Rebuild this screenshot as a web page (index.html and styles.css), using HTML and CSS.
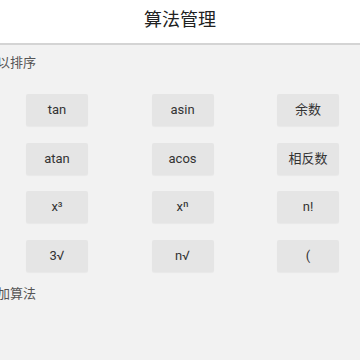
FILE: index.html
```html
<!DOCTYPE html>
<html lang="zh">
<head>
    <meta charset="UTF-8">
    <meta name="viewport" content="width=device-width, initial-scale=1.0">
    <title>算法管理</title>
    <link rel="stylesheet" href="styles.css">
</head>
<body>
    <div class="header">算法管理</div>

    <div class="section-label">以排序</div>
    <div class="grid">
        <div class="button">tan</div>
        <div class="button">asin</div>
        <div class="button">余数</div>
        <div class="button">atan</div>
        <div class="button">acos</div>
        <div class="button">相反数</div>
        <div class="button">x³</div>
        <div class="button">xⁿ</div>
        <div class="button">n!</div>
        <div class="button">3√</div>
        <div class="button">n√</div>
        <div class="button">(</div>
    </div>

    <div class="section-label second">加算法</div>
</body>
</html>
```

FILE: styles.css
```css
body {
    font-family: Roboto, "Noto Sans CJK SC", sans-serif;
    background-color: #f2f2f2;
    margin: 0;
    width: 360px;
    height: 360px;
    overflow: hidden;
}
.header {
    background-color: #ffffff;
    height: 43px;
    line-height: 40px;
    text-align: center;
    font-size: 18px;
    color: #222222;
    border-bottom: 2px solid #d4d4d4;
}
.section-label {
    height: 36px;
    line-height: 36px;
    margin-left: -3px;
    font-size: 13px;
    color: #555555;
}
.section-label.second {
    margin-top: 4px;
}
.grid {
    display: grid;
    grid-template-columns: repeat(3, 62px);
    column-gap: 63.5px;
    row-gap: 16.5px;
    padding-left: 26px;
    margin-top: 13px;
}
.button {
    height: 32px;
    line-height: 32px;
    text-align: center;
    font-size: 13px;
    color: #333333;
    background-color: #e5e5e5;
    border-radius: 2px;
    box-shadow: 0 1px 1px rgba(0, 0, 0, 0.04);
}
```
